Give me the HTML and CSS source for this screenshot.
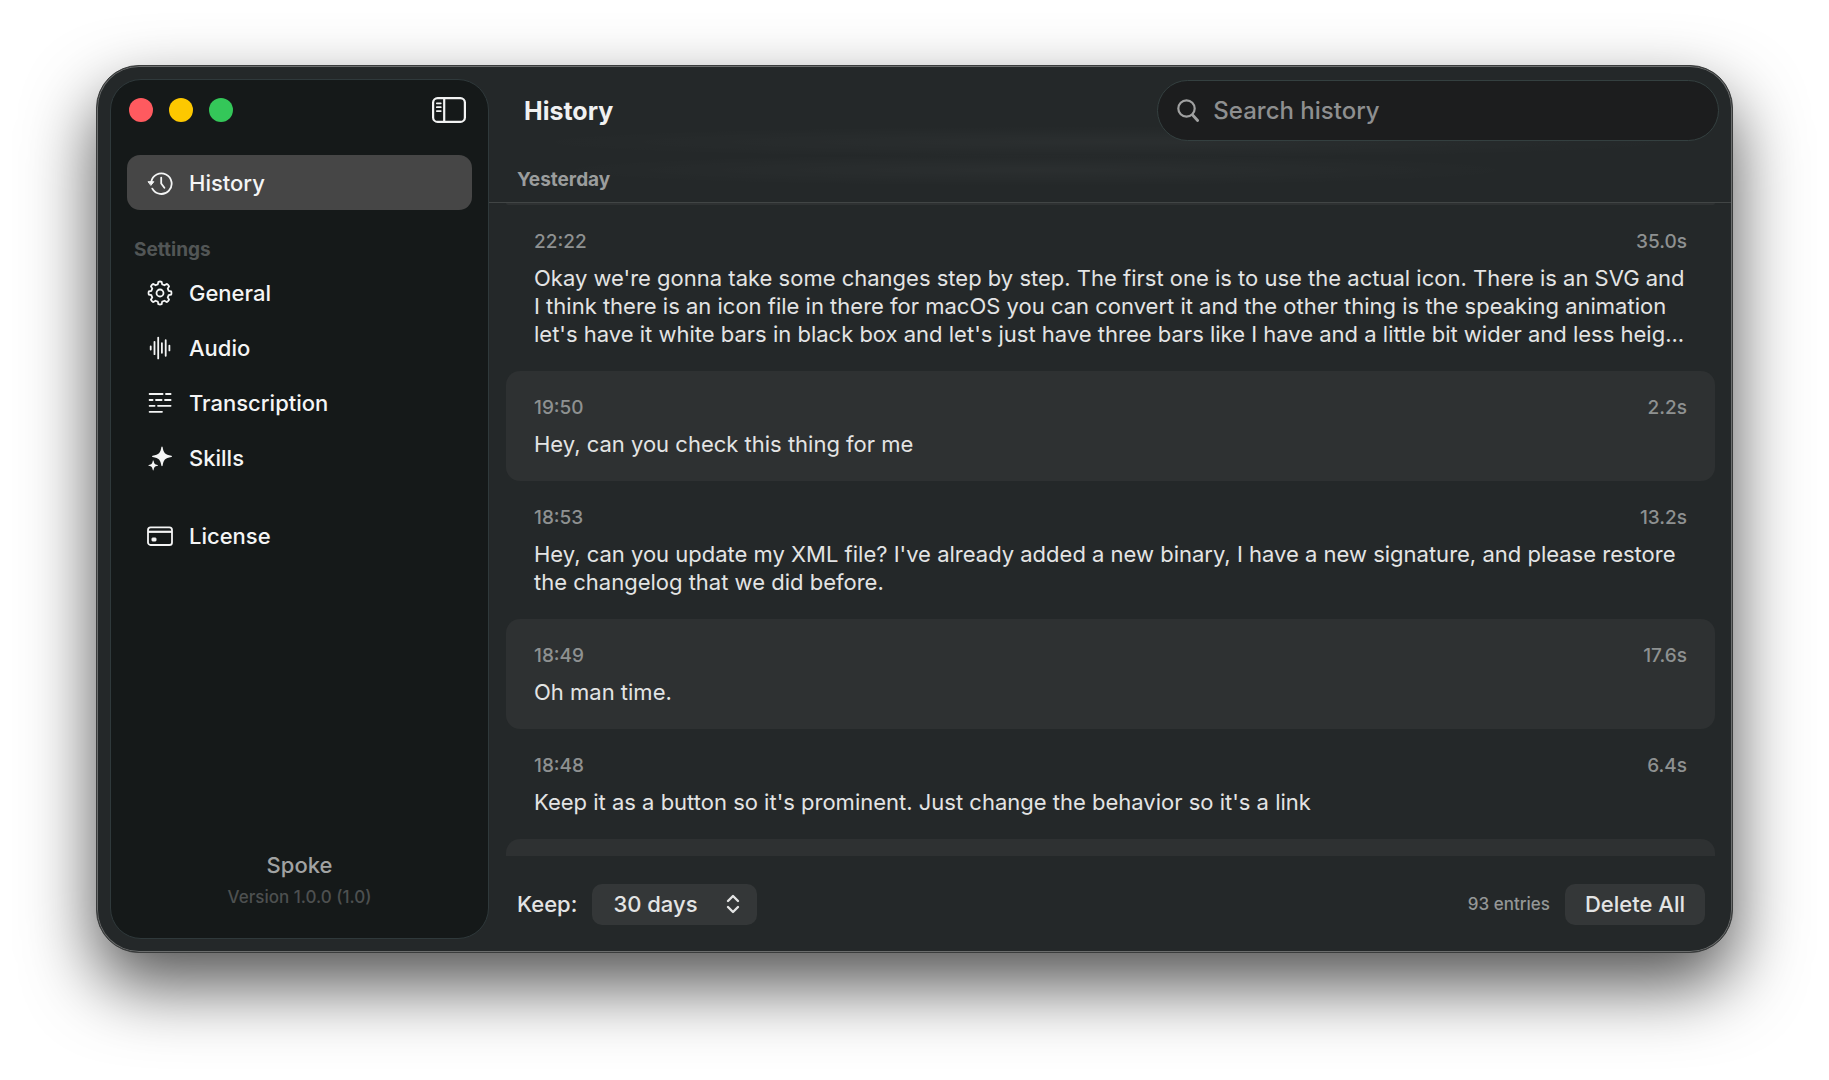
FILE: index.html
```html
<!DOCTYPE html>
<html lang="en">
<head>
<meta charset="utf-8">
<title>Spoke – History</title>
<link rel="stylesheet" href="styles.css">
</head>
<body>
<div class="window">
  <aside class="sidebar">
    <div class="titlebar">
      <button class="light light-close" aria-label="Close"></button>
      <button class="light light-minimize" aria-label="Minimize"></button>
      <button class="light light-zoom" aria-label="Zoom"></button>
      <button class="toggle" aria-label="Toggle sidebar">
        <svg width="34" height="26" viewBox="0 0 34 26" fill="none" stroke="currentColor" stroke-width="2.2">
          <rect x="1.1" y="1.1" width="31.800" height="23.800" rx="4.500"/>
          <path d="M12.200 1v24"/>
          <path d="M4.800 6.300h4M4.800 10.200h4M4.800 14.100h4" stroke-width="1.700" stroke-linecap="round"/>
        </svg>
      </button>
    </div>
    <nav class="nav">
      <a class="nav-item nav-item-active" href="#history">
        <svg class="nav-icon" viewBox="0 0 26 26" fill="none" stroke="currentColor" stroke-width="1.8" stroke-linecap="round" stroke-linejoin="round">
          <path d="M4.200 12A10.300 10.300 0 1 1 5.300 18.600"/>
          <path d="M1.400 11.700h5.400l-2.700 3.400z" fill="currentColor" stroke-width="1"/>
          <path d="M14.200 7.600v5.900l3.200 4.300"/>
        </svg>
        History
      </a>
      <h2 class="nav-heading">Settings</h2>
      <a class="nav-item" href="#general">
        <svg class="nav-icon" viewBox="0 0 26 26" fill="none" stroke="currentColor" stroke-width="1.800" stroke-linejoin="round">
          <path d="M11.400 1.800Q13 1.200 14.600 1.800L15.200 4.400Q16.300 4.700 17.400 5.300L19.700 3.900Q21.300 4.700 22.100 6.300L20.700 8.600Q21.300 9.700 21.600 10.800L24.200 11.400Q24.800 13 24.200 14.600L21.600 15.200Q21.300 16.300 20.700 17.400L22.100 19.700Q21.300 21.300 19.700 22.100L17.400 20.700Q16.300 21.300 15.200 21.600L14.600 24.200Q13 24.800 11.400 24.200L10.800 21.600Q9.700 21.300 8.600 20.700L6.300 22.100Q4.700 21.300 3.900 19.700L5.300 17.400Q4.700 16.300 4.400 15.200L1.800 14.600Q1.200 13 1.800 11.400L4.400 10.800Q4.700 9.700 5.300 8.600L3.900 6.300Q4.700 4.700 6.300 3.900L8.600 5.300Q9.700 4.700 10.800 4.400z"/>
          <circle cx="13" cy="13" r="3.500"/>
        </svg>
        General
      </a>
      <a class="nav-item" href="#audio">
        <svg class="nav-icon" viewBox="0 0 26 26" fill="none" stroke="currentColor" stroke-width="1.8" stroke-linecap="round">
          <path d="M3.700 11.400v3.200M7.500 6.800v12.400M11.200 2.600v20.800M14.900 8.200v9.600M18.700 5.200v15.600M22.400 10.600v4.800"/>
        </svg>
        Audio
      </a>
      <a class="nav-item" href="#transcription">
        <svg class="nav-icon" viewBox="0 0 26 26" fill="none" stroke="currentColor" stroke-width="1.8" stroke-linecap="round">
          <path d="M2.600 4h13M19 4h4.600M2.600 10h3M9 10h5.600M18 10h5.600M2.600 15.800h5M11 15.800h12.600M2.600 21.800h12.400"/>
        </svg>
        Transcription
      </a>
      <a class="nav-item" href="#skills">
        <svg class="nav-icon" viewBox="0 0 26 26" fill="currentColor">
          <path d="M15 1.600c.3 0 .5.2.6.5 1 6 2.300 7.500 8.800 8.700.3.100.5.300.5.600s-.2.500-.5.600c-6.500 1.200-7.800 2.700-8.800 8.700-.1.300-.3.500-.6.500s-.5-.2-.6-.5c-1-6-2.300-7.500-8.800-8.700-.3-.1-.5-.3-.5-.6s.2-.5.500-.6c6.500-1.200 7.800-2.700 8.800-8.700.1-.3.300-.5.600-.5z"/>
          <path d="M6.200 15.400c.2 0 .4.100.4.400.5 2.900 1.200 3.700 4 4.200.3.100.4.200.4.400s-.1.400-.4.400c-2.800.5-3.500 1.300-4 4.200 0 .3-.2.400-.4.400s-.4-.1-.4-.4c-.5-2.900-1.200-3.700-4-4.200-.3 0-.4-.2-.4-.4s.1-.3.400-.4c2.800-.5 3.500-1.300 4-4.200 0-.3.200-.4.400-.4z"/>
        </svg>
        Skills
      </a>
      <a class="nav-item nav-item-spaced" href="#license">
        <svg class="nav-icon" viewBox="0 0 26 26" fill="none" stroke="currentColor" stroke-width="1.800">
          <rect x="1" y="4.400" width="24" height="17.600" rx="2.600"/>
          <path d="M1 8.800h24" stroke-width="2.200"/>
          <rect x="5" y="15" width="4" height="3" rx=".6" fill="currentColor" stroke-width="1"/>
        </svg>
        License
      </a>
    </nav>
    <footer class="about">
      <p class="about-name">Spoke</p>
      <p class="about-version">Version 1.0.0 (1.0)</p>
    </footer>
  </aside>

  <main class="main">
    <header class="header">
      <div class="toolbar">
        <h1 class="title">History</h1>
        <label class="search">
          <svg width="22" height="24" viewBox="0 0 22 24" fill="none" stroke="currentColor" stroke-width="2.200" stroke-linecap="round">
            <circle cx="9.500" cy="9.500" r="8.200"/>
            <path d="M15.600 16l5 5.500" stroke-width="2.800"/>
          </svg>
          <input class="search-input" type="search" placeholder="Search history" aria-label="Search history">
        </label>
      </div>
      <h2 class="day">Yesterday</h2>
    </header>

    <ul class="entries">
      <li class="entry-edge"></li>
      <li class="entry">
        <div class="entry-meta"><time>22:22</time><span>35.0s</span></div>
        <p class="entry-text">Okay we're gonna take some changes step by step. The first one is to use the actual icon. There is an SVG and I think there is an icon file in there for macOS you can convert it and the other thing is the speaking animation let's have it white bars in black box and let's just have three bars like I have and a little bit wider and less heig...</p>
      </li>
      <li class="entry">
        <div class="entry-meta"><time>19:50</time><span>2.2s</span></div>
        <p class="entry-text">Hey, can you check this thing for me</p>
      </li>
      <li class="entry">
        <div class="entry-meta"><time>18:53</time><span>13.2s</span></div>
        <p class="entry-text">Hey, can you update my XML file? I've already added a new binary, I have a new signature, and please restore the changelog that we did before.</p>
      </li>
      <li class="entry">
        <div class="entry-meta"><time>18:49</time><span>17.6s</span></div>
        <p class="entry-text">Oh man time.</p>
      </li>
      <li class="entry">
        <div class="entry-meta"><time>18:48</time><span>6.4s</span></div>
        <p class="entry-text">Keep it as a button so it's prominent. Just change the behavior so it's a link</p>
      </li>
      <li class="entry"></li>
    </ul>

    <footer class="footer">
      <label class="keep" for="keep">Keep:</label>
      <div class="picker">
        <select class="picker-select" id="keep"><option>30 days</option></select>
        <svg class="picker-arrows" width="14" height="20" viewBox="0 0 14 20" fill="none" stroke="currentColor" stroke-width="2.400" stroke-linecap="round" stroke-linejoin="round">
          <path d="M2 7l5-5 5 5M2 13l5 5 5-5"/>
        </svg>
      </div>
      <span class="count">93 entries</span>
      <button class="delete">Delete All</button>
    </footer>
  </main>
</div>
</body>
</html>
```

FILE: styles.css
```css
*,
*::before,
*::after {
  box-sizing: border-box;
}

body {
  display: flex;
  height: 100vh;
  margin: 0;
  padding: 65px 96px 127px;
  overflow: hidden;
  background: #fff;
  color: #e3e4e4;
  font-family: Inter, "Liberation Sans", sans-serif;
  font-size: 22px;
  line-height: 28px;
}

h1,
h2,
p,
ul {
  margin: 0;
  padding: 0;
}

button,
input,
select {
  border: 0;
  color: inherit;
  font: inherit;
}

.window {
  display: flex;
  flex: 1;
  min-width: 0;
  border: 1px solid #3a3c3c;
  border-radius: 43px;
  background: #242829;
  box-shadow: inset 0 0 0 1px #6b6d6d, 0 32px 70px rgba(0, 0, 0, 0.68);
}

/* Sidebar */

.sidebar {
  display: flex;
  flex: none;
  flex-direction: column;
  width: 379px;
  margin: 13px 0 13px 13px;
  border: 1px solid #2f393b;
  border-radius: 31px;
  background: #151919;
}

.titlebar {
  display: flex;
  align-items: center;
  gap: 16px;
  height: 60px;
  padding: 0 22px 0 18px;
}

.light {
  width: 24px;
  height: 24px;
  padding: 0;
  border-radius: 50%;
}

.light-close {
  background: #ff5a5f;
}

.light-minimize {
  background: #fdc800;
}

.light-zoom {
  background: #34c759;
}

.toggle {
  display: flex;
  margin-left: auto;
  padding: 0;
  background: none;
  color: #f2f3f3;
}

.nav {
  display: flex;
  flex: 1;
  flex-direction: column;
  padding: 15px 16px;
}

.nav-item {
  display: flex;
  align-items: center;
  gap: 16px;
  height: 55px;
  padding: 0 20px;
  border-radius: 13px;
  color: #f4f5f5;
  font-weight: 500;
  text-decoration: none;
}

.nav-item-active {
  background: #464646;
}

.nav-item-spaced {
  margin-top: 23px;
}

.nav-icon {
  width: 26px;
  height: 26px;
}

.nav-heading {
  padding: 26px 7px 1px;
  color: #525656;
  font-size: 19px;
  font-weight: 700;
}

.about {
  padding-bottom: 27px;
  text-align: center;
}

.about-name {
  color: #a1a3a3;
  font-weight: 500;
}

.about-version {
  margin-top: 4px;
  color: #4d5050;
  font-size: 17px;
  font-weight: 500;
}

/* Main pane */

.main {
  display: flex;
  flex: 1;
  flex-direction: column;
  min-width: 0;
}

.header {
  flex: none;
  margin-right: 1px;
  border-bottom: 1px solid #414545;
  background:
    radial-gradient(closest-side, rgba(255, 255, 255, 0.03), transparent) 45% 60px / 96% 32px no-repeat,
    radial-gradient(closest-side, rgba(255, 255, 255, 0.03), transparent) 20% 88px / 80% 32px no-repeat;
}

.toolbar {
  display: flex;
  align-items: center;
  justify-content: space-between;
  padding: 14px 12px 0 35px;
}

.title {
  color: #f0f1f1;
  font-size: 25px;
  font-weight: 700;
}

.search {
  display: flex;
  align-items: center;
  gap: 14px;
  width: 47%;
  height: 61px;
  padding: 0 19px;
  border: 1px solid #344040;
  border-radius: 31px;
  background: #1c1d1e;
  color: #a0a1a1;
}

.search-input {
  flex: 1;
  min-width: 0;
  padding: 0;
  background: none;
  font-size: 24px;
  outline: none;
}

.search-input::placeholder {
  color: #8e8f90;
  font-weight: 500;
}

.day {
  padding: 25px 28px 8px;
  color: #9b9d9d;
  font-size: 19px;
  font-weight: 700;
}

.entries {
  flex: 1;
  min-height: 0;
  padding: 0 17px;
  overflow: hidden;
  list-style: none;
}

.entry-edge {
  height: 2px;
  border-radius: 0 0 14px 14px;
  background: #2e3132;
}

.entry {
  min-height: 110px;
  padding: 26px 28px 23px;
  border-radius: 14px;
}

.entry:nth-child(odd) {
  background: #2e3132;
}

.entry-meta {
  display: flex;
  justify-content: space-between;
  margin-bottom: 11px;
  color: #8e9191;
  font-size: 19px;
  font-weight: 500;
  line-height: 22px;
}

.footer {
  display: flex;
  flex: none;
  align-items: center;
  height: 96px;
  padding: 0 27px 0 28px;
}

.keep {
  font-weight: 500;
}

.picker {
  display: grid;
  align-items: center;
  margin-left: 15px;
}

.picker-select,
.picker-arrows {
  grid-area: 1 / 1;
}

.picker-select {
  width: 165px;
  height: 41px;
  padding: 0 21px;
  border-radius: 10px;
  background: #343738;
  font-weight: 500;
  appearance: none;
}

.picker-arrows {
  justify-self: end;
  margin-right: 17px;
  pointer-events: none;
}

.count {
  margin-left: auto;
  color: #949797;
  font-size: 17px;
  font-weight: 500;
}

.delete {
  height: 41px;
  margin-left: 15px;
  padding: 0 20px;
  border-radius: 10px;
  background: #343738;
  font-weight: 500;
}
```
